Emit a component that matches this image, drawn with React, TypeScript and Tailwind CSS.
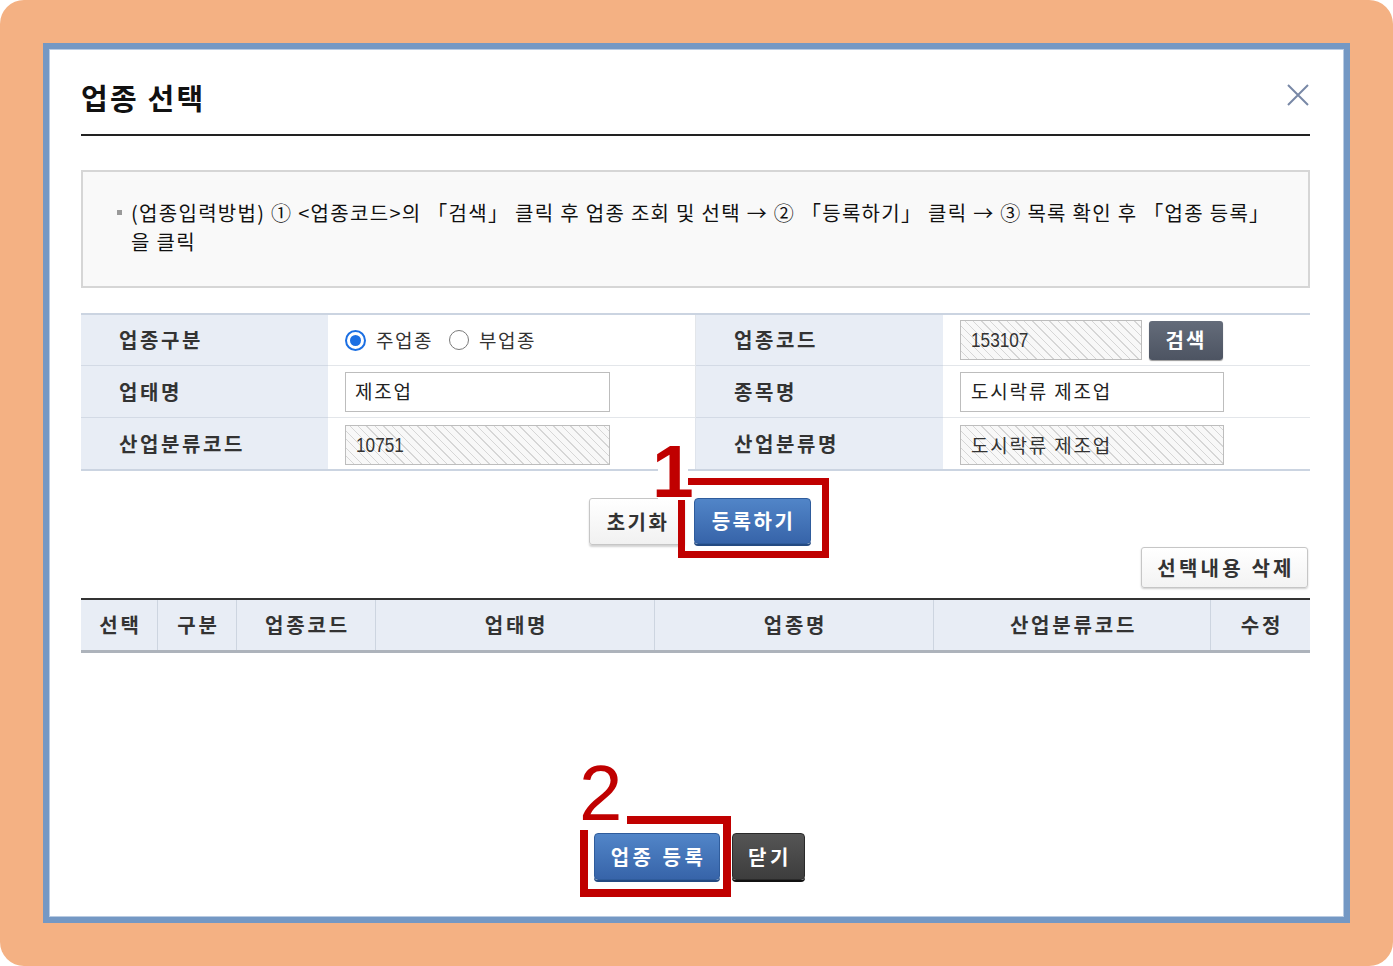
import React from "react";

const KR = "font-['Noto_Sans_CJK_KR','Noto_Sans',sans-serif]";

function Radio({ checked }: { checked: boolean }) {
  if (checked) {
    return (
      <div className="flex h-[21px] w-[21px] items-center justify-center rounded-full border-[2px] border-[#1b6fe3] bg-white">
        <div className="h-[11px] w-[11px] rounded-full bg-[#1b6fe3]" />
      </div>
    );
  }
  return <div className="h-[20px] w-[20px] rounded-full border border-[#7a7a7a] bg-white" />;
}

function Label({ children, last }: { children: React.ReactNode; last?: boolean }) {
  return (
    <div
      className={
        "flex items-center bg-[#e8edf5] pl-[38px] text-[20px] font-bold tracking-[2.6px] text-[#333] " +
        (last ? "" : "border-b border-[#d3dae5]")
      }
    >
      {children}
    </div>
  );
}

function Value({ children, last, divider }: { children: React.ReactNode; last?: boolean; divider?: boolean }) {
  return (
    <div
      className={
        "flex items-center bg-white pl-[17px] " +
        (last ? "" : "border-b border-[#e3e6ea] ") +
        (divider ? "border-r border-[#dfe4ec]" : "")
      }
    >
      {children}
    </div>
  );
}

const hatch =
  "bg-[repeating-linear-gradient(45deg,#f8f8f8_0px,#f8f8f8_5px,#d6d6d6_5px,#d6d6d6_6px)]";

function Digits({ children }: { children: React.ReactNode }) {
  return (
    <span className="inline-block origin-left scale-x-[0.86] font-['Liberation_Sans',sans-serif] text-[20px] text-[#333]">
      {children}
    </span>
  );
}

export default function App() {
  return (
    <div className={"relative h-[966px] w-[1393px] overflow-hidden bg-white " + KR}>
      <div className="h-[966px] w-[1393px] rounded-[24px] bg-[#f4b183] pl-[43px] pt-[43px]">
        <div className="box-border h-[880px] w-[1307px] border-[6px] border-[#7498c4]">
          <div className="flex h-full flex-col border border-[#b9cbe2] bg-white pl-[31px] pr-[33px]">
            {/* Title */}
            <div className="flex h-[84px] items-center justify-between pt-[11px]">
              <div className="text-[29px] font-bold tracking-[2.2px] text-[#111]">업종 선택</div>
              <svg width="22" height="22" viewBox="0 0 22 22" className="-mt-[5px] mr-[1px]">
                <path d="M1 1 L21 21 M21 1 L1 21" stroke="#7888a6" strokeWidth="2" fill="none" />
              </svg>
            </div>
            <div className="h-[2px] bg-[#222]" />

            {/* Info */}
            <div className="mt-[34px] h-[118px] border-2 border-[#d6d6d6] bg-[#f9f9f9] pl-[34px] pt-[26px]">
              <div className="flex text-[20px] leading-[29px] text-[#111]">
                <div className="w-[14px] pt-[12px]">
                  <div className="h-[5px] w-[5px] bg-[#9a9a9a]" />
                </div>
                <div className="whitespace-nowrap tracking-[1.3px]">
                  (업종입력방법) ① &lt;업종코드&gt;의 「검색」 클릭 후 업종 조회 및 선택 → ② 「등록하기」 클릭 → ③ 목록 확인 후 「업종 등록」
                  <br />을 클릭
                </div>
              </div>
            </div>

            {/* Form table */}
            <div className="mt-[25px] grid grid-cols-[247px_368px_247px_367px] grid-rows-[51px_52px_51px] border-t-2 border-b-2 border-t-[#cbd4e1] border-b-[#cbd4e1]">
              <Label>업종구분</Label>
              <Value divider>
                <Radio checked />
                <span className="ml-[10px] text-[19px] tracking-[1.5px] text-[#333]">주업종</span>
                <div className="ml-[16px]">
                  <Radio checked={false} />
                </div>
                <span className="ml-[10px] text-[19px] tracking-[1.5px] text-[#333]">부업종</span>
              </Value>
              <Label>업종코드</Label>
              <Value>
                <div className={"flex h-[40px] w-[182px] items-center border border-[#bdbdbd] pl-[10px] " + hatch}>
                  <Digits>153107</Digits>
                </div>
                <div className="ml-[7px] flex h-[39px] w-[74px] items-center justify-center rounded-[3px] bg-[linear-gradient(#646c7a,#4d5462)] text-[20px] font-bold tracking-[2px] text-white shadow-[0_1px_1px_rgba(0,0,0,0.4)]">
                  검색
                </div>
              </Value>

              <Label>업태명</Label>
              <Value divider>
                <div className="flex h-[40px] w-[265px] items-center border border-[#bdbdbd] bg-white pl-[9px] text-[19px] tracking-[1.8px] text-[#222]">
                  제조업
                </div>
              </Value>
              <Label>종목명</Label>
              <Value>
                <div className="flex h-[40px] w-[264px] items-center border border-[#bdbdbd] bg-white pl-[10px] text-[19px] tracking-[1.8px] text-[#222]">
                  도시락류 제조업
                </div>
              </Value>

              <Label last>산업분류코드</Label>
              <Value divider last>
                <div className={"mt-[3px] flex h-[40px] w-[265px] items-center border border-[#bdbdbd] pl-[10px] " + hatch}>
                  <Digits>10751</Digits>
                </div>
              </Value>
              <Label last>산업분류명</Label>
              <Value last>
                <div className={"mt-[3px] flex h-[40px] w-[264px] items-center border border-[#bdbdbd] pl-[10px] text-[19px] tracking-[1.8px] text-[#333] " + hatch}>
                  도시락류 제조업
                </div>
              </Value>
            </div>

            {/* Action buttons */}
            <div className="mt-[27px] flex justify-center gap-[9px] pl-[9px]">
              <div className="flex h-[47px] w-[96px] items-center justify-center rounded-[3px] border border-[#c6c6c6] bg-[linear-gradient(#ffffff,#f1f1f1)] pl-[2px] text-[20px] font-bold tracking-[2.4px] text-[#333] shadow-[0_2px_2px_rgba(0,0,0,0.18)]">
                초기화
              </div>
              <div className="flex h-[46px] w-[117px] items-center justify-center rounded-[4px] border border-[#2f5c9c] bg-[linear-gradient(#5185c8,#3764a9)] pl-[2px] text-[20px] font-bold tracking-[2.5px] text-white shadow-[0_2px_0_#244a82]">
                등록하기
              </div>
            </div>

            <div className="mt-[2px] flex justify-end pr-[2px]">
              <div className="flex h-[41px] w-[167px] items-center justify-center rounded-[3px] border border-[#c6c6c6] bg-[linear-gradient(#ffffff,#f3f3f3)] pl-[3px] text-[20px] font-bold tracking-[3.2px] text-[#333] shadow-[0_1px_2px_rgba(0,0,0,0.2)]">
                선택내용 삭제
              </div>
            </div>

            {/* List header */}
            <div className="mt-[10px] flex h-[55px] border-t-2 border-b-[3px] border-t-[#333] border-b-[#adb3bb] bg-[#e8edf5] text-[20px] font-bold tracking-[2.8px] text-[#333]">
              <div className="flex w-[77px] items-center justify-center border-r border-[#cdd5e0] pl-[3px]">선택</div>
              <div className="flex w-[79px] items-center justify-center border-r border-[#cdd5e0] pl-[3px]">구분</div>
              <div className="flex w-[139px] items-center justify-center border-r border-[#cdd5e0] pl-[3px]">업종코드</div>
              <div className="flex w-[279px] items-center justify-center border-r border-[#cdd5e0] pl-[3px]">업태명</div>
              <div className="flex w-[279px] items-center justify-center border-r border-[#cdd5e0] pl-[3px]">업종명</div>
              <div className="flex w-[277px] items-center justify-center border-r border-[#cdd5e0] pl-[3px]">산업분류코드</div>
              <div className="flex w-[99px] items-center justify-center pl-[3px]">수정</div>
            </div>

            {/* Bottom buttons */}
            <div className="mt-[180px] flex justify-center gap-[12px] pl-[8px]">
              <div className="flex h-[47px] w-[126px] items-center justify-center rounded-[4px] border border-[#2f5c9c] bg-[linear-gradient(#5185c8,#3764a9)] pl-[3px] text-[20px] font-bold tracking-[3.5px] text-white shadow-[0_2px_0_#244a82]">
                업종 등록
              </div>
              <div className="flex h-[47px] w-[73px] items-center justify-center rounded-[4px] border border-[#2a2a2a] bg-[linear-gradient(#555,#3d3d3d)] pl-[3px] text-[20px] font-bold tracking-[3.5px] text-white shadow-[0_2px_0_#111]">
                닫기
              </div>
            </div>
          </div>
        </div>
      </div>

      {/* Annotations */}
      <div className="absolute left-[678px] top-[478px] h-[80px] w-[151px] border-[7px] border-[#c00000]" />
      <div className="absolute left-[658px] top-[436px] h-[64px] w-[30px] bg-white" />
      <div className="absolute left-[652px] top-[434px] font-['Liberation_Sans',sans-serif] text-[75px] font-bold leading-none text-[#c00000]">
        1
      </div>

      <div className="absolute left-[580px] top-[816px] h-[81px] w-[151px] border-[8px] border-[#c00000]" />
      <div className="absolute left-[574px] top-[758px] h-[72px] w-[53px] bg-white" />
      <div className="absolute left-[579px] top-[754px] font-['Liberation_Sans',sans-serif] text-[78px] leading-none text-[#c00000]">
        2
      </div>
    </div>
  );
}
